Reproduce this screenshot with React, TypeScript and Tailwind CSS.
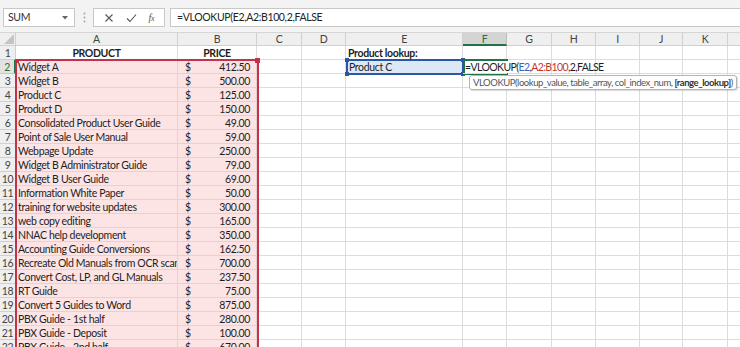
import React from "react";

const cols = [
  { k: "A", w: "w-[162px]" },
  { k: "B", w: "w-[79px]" },
  { k: "C", w: "w-[45px]" },
  { k: "D", w: "w-[44px]" },
  { k: "E", w: "w-[117px]" },
  { k: "F", w: "w-[44px]" },
  { k: "G", w: "w-[45px]" },
  { k: "H", w: "w-[44px]" },
  { k: "I", w: "w-[44px]" },
  { k: "J", w: "w-[43px]" },
  { k: "K", w: "w-[45px]" },
  { k: "L", w: "w-[60px]" },
];

const data: [string, string][] = [
  ["Widget A", "412.50"],
  ["Widget B", "500.00"],
  ["Product C", "125.00"],
  ["Product D", "150.00"],
  ["Consolidated Product User Guide", "49.00"],
  ["Point of Sale User Manual", "59.00"],
  ["Webpage Update", "250.00"],
  ["Widget B Administrator Guide", "79.00"],
  ["Widget B User Guide", "69.00"],
  ["Information White Paper", "50.00"],
  ["training for website updates", "300.00"],
  ["web copy editing", "165.00"],
  ["NNAC help development", "350.00"],
  ["Accounting Guide Conversions", "162.50"],
  ["Recreate Old Manuals from OCR scanning", "700.00"],
  ["Convert Cost, LP, and GL Manuals", "237.50"],
  ["RT Guide", "75.00"],
  ["Convert 5 Guides to Word", "875.00"],
  ["PBX Guide - 1st half", "280.00"],
  ["PBX Guide - Deposit", "100.00"],
  ["PBX Guide - 2nd half", "670.00"],
];

const font = { fontFamily: "Lato, 'Liberation Sans', sans-serif" };

function Cell({ w, children, pink, className = "" }: { w: string; children?: React.ReactNode; pink?: boolean; className?: string }) {
  return (
    <div
      className={`${w} shrink-0 h-full border-r border-b ${pink ? "bg-[#fce4e4] border-[#e3d2d2]" : "border-[#dcdcdc]"} flex items-end leading-[12px] overflow-hidden whitespace-nowrap ${className}`}
    >
      {children}
    </div>
  );
}

export default function App() {
  return (
    <div className="w-[740px] h-[347px] overflow-hidden bg-white text-[10.5px] tracking-[-0.35px] text-[#1e1e1e]" style={font}>
      {/* Top bar */}
      <div className="h-[33px] bg-[#f3f3f3] border-b border-[#d6d6d6] flex items-start pt-[8px]">
        <div className="ml-[3px] w-[72px] h-[19px] bg-white border border-[#c8c8c8] flex items-center pl-[4px] relative text-[#333]">
          SUM
          <svg className="absolute right-[6px] top-[7px]" width="6" height="4" viewBox="0 0 6 4">
            <path d="M0 0 L6 0 L3 3.5 Z" fill="#666" />
          </svg>
        </div>
        <div className="w-[18px] h-[19px] flex items-center justify-center">
          <svg width="3" height="11" viewBox="0 0 3 11">
            <circle cx="1.5" cy="1.5" r="0.9" fill="#a0a0a0" />
            <circle cx="1.5" cy="5.5" r="0.9" fill="#a0a0a0" />
            <circle cx="1.5" cy="9.5" r="0.9" fill="#a0a0a0" />
          </svg>
        </div>
        <div className="w-[72px] h-[19px] bg-white border border-[#c8c8c8] flex items-center justify-around px-[4px]">
          <svg width="10" height="10" viewBox="0 0 10 10">
            <path d="M1.5 1.5 L8.5 8.5 M8.5 1.5 L1.5 8.5" stroke="#555" strokeWidth="1.1" />
          </svg>
          <svg width="11" height="10" viewBox="0 0 11 10">
            <path d="M1 5.5 L4 8.5 L10 1.5" stroke="#555" strokeWidth="1.1" fill="none" />
          </svg>
          <span className="italic text-[#555] text-[10px]" style={{ fontFamily: "'Liberation Serif', serif" }}>
            f<span className="text-[8px]">x</span>
          </span>
        </div>
        <div className="ml-[5px] flex-1 h-[19px] bg-white border border-[#c8c8c8] border-r-0 flex items-center pl-[6px] text-[#222]">
          =VLOOKUP(E2,A2:B100,2,FALSE
        </div>
      </div>

      {/* Grid */}
      <div className="relative">
        {/* column headers */}
        <div className="flex h-[13px]">
          <div className="w-[16px] shrink-0 h-full bg-[#efefef] border-r border-b border-[#d0d0d0] relative">
            <svg className="absolute right-[1px] bottom-[1px]" width="10" height="10" viewBox="0 0 10 10">
              <path d="M10 0 L10 10 L0 10 Z" fill="#c4c4c4" />
            </svg>
          </div>
          {cols.map((c) => (
            <div
              key={c.k}
              className={`${c.w} shrink-0 h-full border-r flex items-center justify-center text-[10.5px] leading-[12px] ${
                c.k === "F"
                  ? "bg-[#d4d4d4] border-[#bdbdbd] border-b-2 border-b-[#217346] text-[#217346]"
                  : "bg-[#efefef] border-[#d0d0d0] border-b text-[#444]"
              }`}
            >
              {c.k}
            </div>
          ))}
        </div>

        {/* row 1 */}
        <div className="flex h-[14px]">
          <div className="w-[16px] shrink-0 h-full bg-[#efefef] border-r border-b border-[#d0d0d0] flex items-center justify-center text-[10.5px] leading-[12px] text-[#444]">1</div>
          <Cell w="w-[162px]" className="justify-center font-bold">PRODUCT</Cell>
          <Cell w="w-[79px]" className="justify-center font-bold">PRICE</Cell>
          <Cell w="w-[45px]" />
          <Cell w="w-[44px]" />
          <Cell w="w-[117px]" className="pl-[2px] font-bold overflow-visible">Product lookup:</Cell>
          {cols.slice(5).map((c) => (
            <Cell key={c.k} w={c.w} />
          ))}
        </div>

        {data.map(([name, price], i) => {
          const r = i + 2;
          return (
            <div key={r} className="flex h-[14px]">
              <div
                className={`w-[16px] shrink-0 h-full border-b flex items-center justify-center text-[10.5px] leading-[12px] ${
                  r === 2 ? "bg-[#e2e2e2] border-[#c8c8c8] border-r-2 border-r-[#217346] text-[#217346]" : "bg-[#efefef] border-[#d0d0d0] border-r text-[#444]"
                }`}
              >
                {r}
              </div>
              <Cell w="w-[162px]" pink className="pl-[2px]">{name}</Cell>
              <Cell w="w-[79px]" pink className="pl-[7px] pr-[6px] justify-between">
                <span>$</span>
                <span>{price}</span>
              </Cell>
              <Cell w="w-[45px]" />
              <Cell w="w-[44px]" />
              {r === 2 ? (
                <Cell w="w-[117px]" className="pl-[3px] bg-[#dde8f6]">Product C</Cell>
              ) : (
                <Cell w="w-[117px]" />
              )}
              {r === 2 ? (
                <div className="w-[44px] shrink-0 h-full border-b border-[#dcdcdc] flex items-end leading-[12px] pl-[2px] whitespace-nowrap overflow-visible relative z-10 tracking-[-0.6px]">
                  <span>
                    =VLOOKUP(<span className="text-[#2f67c2]">E2</span>,<span className="text-[#c0392b]">A2:B100</span>,2,FALSE
                  </span>
                  <span className="inline-block w-[1px] h-[12px] bg-[#222] ml-[1px]" />
                </div>
              ) : (
                <Cell w="w-[44px]" />
              )}
              {cols.slice(6).map((c) => (
                <Cell key={c.k} w={c.w} />
              ))}
            </div>
          );
        })}

        {/* red range border A2:B100 */}
        <div className="absolute left-[15px] top-[26px] w-[244px] h-[400px] border-2 border-[#c4314b] pointer-events-none">
          <div className="absolute -left-[2px] -top-[2px] w-[4px] h-[4px] bg-[#c4314b]" />
          <div className="absolute -right-[3px] -top-[3px] w-[5px] h-[5px] bg-[#c4314b]" />
        </div>

        {/* blue E2 border */}
        <div className="absolute left-[346px] top-[26px] w-[118px] h-[16px] border-2 border-[#2957a4] pointer-events-none">
          <div className="absolute -left-[3px] -top-[3px] w-[4px] h-[4px] bg-[#2957a4]" />
          <div className="absolute -right-[3px] -top-[3px] w-[4px] h-[4px] bg-[#2957a4]" />
          <div className="absolute -left-[3px] -bottom-[3px] w-[4px] h-[4px] bg-[#2957a4]" />
          <div className="absolute -right-[3px] -bottom-[3px] w-[4px] h-[4px] bg-[#2957a4]" />
        </div>

        {/* green active F2 border */}
        <div className="absolute left-[463px] top-[26px] w-[45px] h-[16px] border-2 border-[#217346] border-r-0 pointer-events-none" />
        <div className="absolute left-[463px] top-[26px] w-[2px] h-[16px] bg-[#217346]" />

        {/* tooltip */}
        <div className="absolute left-[469px] top-[42px] h-[15px] px-[3px] bg-white border border-[#b5b5b5] rounded-[3px] shadow-[1px_1px_1px_rgba(0,0,0,0.15)] flex items-center text-[9.5px] leading-[12px] tracking-[-0.45px] text-[#555] whitespace-nowrap z-20">
          VLOOKUP(lookup_value, table_array, col_index_num,&nbsp;<span className="font-bold text-[#333]">[range_lookup]</span>)
        </div>
      </div>
    </div>
  );
}
